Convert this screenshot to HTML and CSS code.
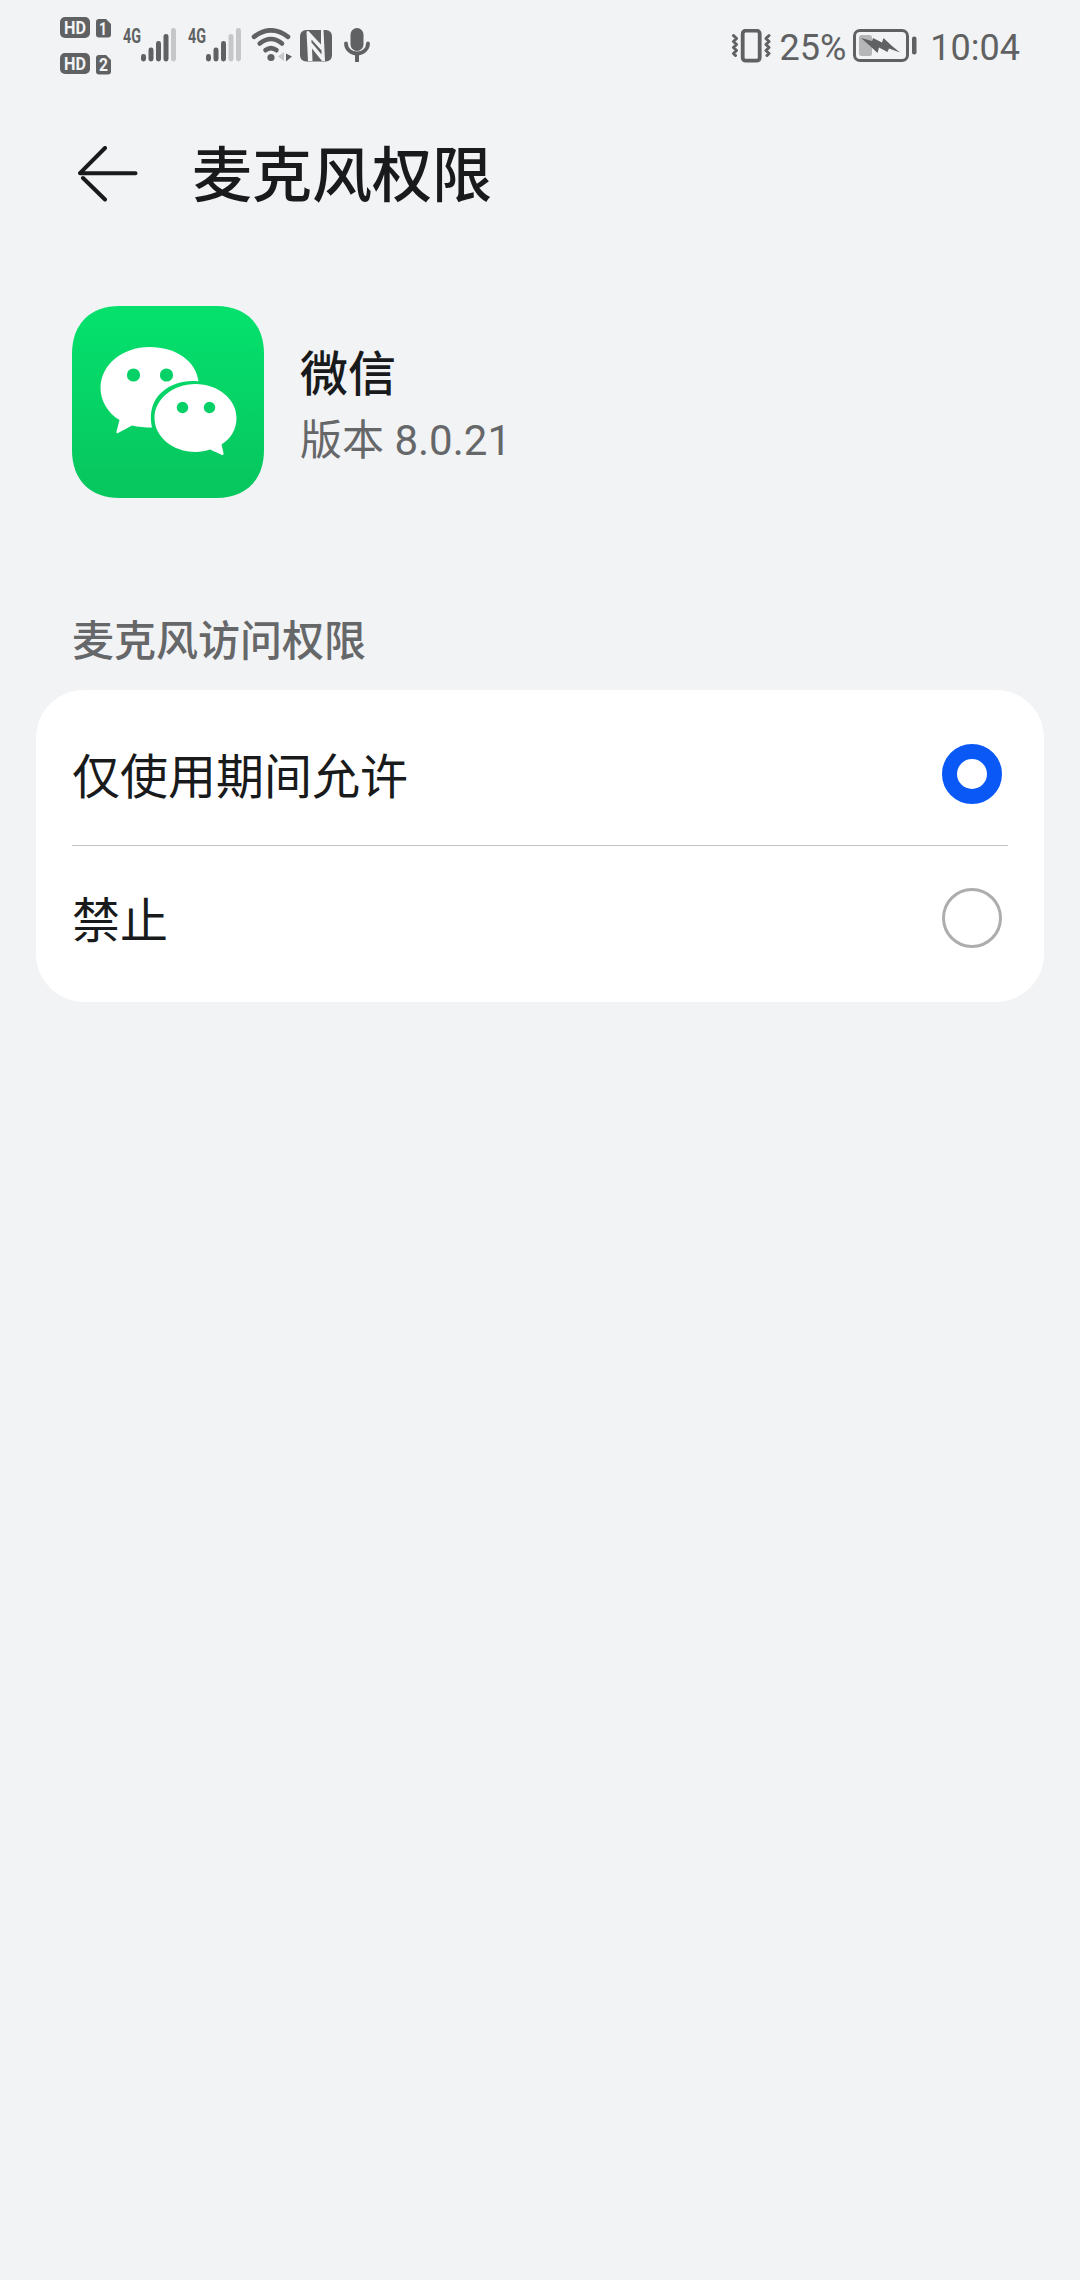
FILE: index.html
```html
<!DOCTYPE html>
<html lang="zh-CN">
<head>
<meta charset="UTF-8" />
<meta name="viewport" content="width=device-width, initial-scale=1" />
<title>麦克风权限</title>
<link rel="stylesheet" href="styles.css">
</head>
<body>
  <div class="status-bar">
    <div class="status-left">
      <!-- HD + SIM badges -->
      <svg class="icon-hd" width="52" height="60" viewBox="0 0 52 60">
        <rect x="0" y="0" width="30" height="21" rx="5" />
        <text class="badge" x="4" y="17.2" font-size="19" textLength="22" lengthAdjust="spacingAndGlyphs">HD</text>
        <path d="M39 2h7l5 5v10.500a3 3 0 0 1-3 3h-9a3 3 0 0 1-3-3v-12.500a3 3 0 0 1 3-3z" />
        <text class="badge" x="39" y="18" font-size="18" textLength="8" lengthAdjust="spacingAndGlyphs">1</text>
        <rect x="0" y="36" width="30" height="21" rx="5" />
        <text class="badge" x="4" y="53.200" font-size="19" textLength="22" lengthAdjust="spacingAndGlyphs">HD</text>
        <path d="M39 38h7l5 5v11.500a3 3 0 0 1-3 3h-9a3 3 0 0 1-3-3v-13.500a3 3 0 0 1 3-3z" />
        <text class="badge" x="39" y="54.400" font-size="18" textLength="9" lengthAdjust="spacingAndGlyphs">2</text>
      </svg>
      <svg class="icon-signal" width="54" height="42" viewBox="0 -8 54 42">
        <text class="net" x="0" y="15" font-size="20.500" textLength="18" lengthAdjust="spacingAndGlyphs">4G</text>
        <rect x="18" y="26" width="5" height="7.500" rx="2.400" />
        <rect x="25.500" y="19.500" width="5" height="14" rx="2.400" />
        <rect x="33" y="13" width="5" height="20.500" rx="2.400" />
        <rect x="40.500" y="6" width="5" height="27.500" rx="2.400" />
        <rect class="dim" x="48" y="0" width="5" height="33.500" rx="2.400" />
      </svg>
      <svg class="icon-signal" width="54" height="42" viewBox="0 -8 54 42">
        <text class="net" x="0" y="15" font-size="20.500" textLength="18" lengthAdjust="spacingAndGlyphs">4G</text>
        <rect x="18" y="26" width="5" height="7.500" rx="2.400" />
        <rect x="25.500" y="19.500" width="5" height="14" rx="2.400" />
        <rect x="33" y="13" width="5" height="20.500" rx="2.400" />
        <rect class="dim" x="40.500" y="6" width="5" height="27.500" rx="2.400" />
        <rect class="dim" x="48" y="0" width="5" height="33.500" rx="2.400" />
      </svg>
      <svg class="icon-wifi" width="42" height="34" viewBox="0 0 42 34">
        <g class="line" stroke-width="4.600">
          <path d="M3 8.800Q20 -4.200 37 8.800" />
          <path d="M8.700 15.500Q20 6.500 31 15.500" />
          <path d="M14.500 22.200Q20 18 25.500 22.200" />
        </g>
        <circle cx="20" cy="29.500" r="3.600" />
        <path class="dim" d="M33 24v9l-6-4.500z" />
        <path d="M35 25.500l6 3-6 5z" />
      </svg>
      <svg class="icon-nfc" width="32" height="32" viewBox="0 0 32 32">
        <rect width="32" height="31.500" rx="6" />
        <path class="cut" d="M6.500 1.500L8.500 1L21 14.500V0h2.500L25 31h-3L12 18.500L12.500 31H8z" />
        <path d="M11.500 9.500L21.500 20.500V24.500L11.500 12.500z" />
      </svg>
      <svg class="icon-mic" width="26" height="34" viewBox="0 0 26 34">
        <rect x="6.500" y="0" width="13" height="23" rx="6.500" />
        <path class="line" stroke-width="3.800" d="M2 15.500a11 10 0 0 0 22 0" />
        <path d="M11 26h4v8h-4z" />
      </svg>
    </div>
    <div class="status-right">
      <svg class="icon-vibrate" width="40" height="34" viewBox="0 0 40 34">
        <rect class="line" x="11.700" y="1.700" width="17" height="30" rx="3" stroke-width="3.800" />
        <path class="line" stroke-width="3" d="M2.500 6.500l3 3-3 3 3 3-3 3 3 3-3 3 2 2M38 6.500l-3 3 3 3-3 3 3 3-3 3 3 3-2 2" />
      </svg>
      <span class="percent">25%</span>
      <svg class="icon-battery" width="64" height="34" viewBox="0 0 64 34">
        <rect class="fill" x="6" y="6" width="13" height="21" rx="2.500" />
        <rect class="line" x="1.500" y="1.500" width="53" height="30" rx="5.500" stroke-width="3" />
        <rect x="59" y="7.500" width="4.500" height="18" rx="2" />
        <path d="M8 9l11 3 1-3 9 4.500 1.500-4.500 8.500 8 8 6.500-11-4-1.500 3.500-8.500-4.500-1.500 5.500-8.500-8z" />
      </svg>
      <span class="clock">10:04</span>
    </div>
  </div>

  <div class="header">
    <svg class="back" width="60" height="56" viewBox="0 0 60 56">
      <path d="M27 2L2 27.200H57.500M27 53.500L5 32" />
    </svg>
    <h1>麦克风权限</h1>
  </div>

  <div class="app">
    <svg class="app-icon" width="192" height="192" viewBox="0 0 192 192">
      <defs>
        <linearGradient id="green" x1="0" y1="0" x2="0" y2="1">
          <stop offset="0.100" stop-color="#05df6c" />
          <stop offset="0.900" stop-color="#07c75f" />
        </linearGradient>
      </defs>
      <path fill="url(#green)" d="M48 0H144C174 0 192 18 192 48V144C192 174 174 192 144 192H48C18 192 0 174 0 144V48C0 18 18 0 48 0Z" />
      <path class="bubble" d="M77.500 41C104 41 124 55 126.500 75.200C110 73.500 95 79 86 90C79 99 77.500 110 80 121.500C73 121.500 66 121 60 119.500L46 127Q44 128 44.500 125.500L47.500 114C36 107 28.500 95 28.500 82C28.500 59 50 41 77.500 41Z" />
      <path class="bubble" d="M123.500 78C146 78 164.500 93 164.500 112C164.500 123 159 132.500 149.500 138.500L151.500 147Q152 150 149 148.500L138 143.500C133.500 145 128.500 146 123.500 146C101 146 82.500 131 82.500 112C82.500 93 101 78 123.500 78Z" />
      <g fill="#06d167">
        <circle cx="61.500" cy="69" r="6.600" />
        <circle cx="94.500" cy="69" r="6.600" />
        <circle cx="110.500" cy="101.500" r="5.700" />
        <circle cx="137.500" cy="101.500" r="5.700" />
      </g>
    </svg>
    <div class="app-info">
      <div class="app-name">微信</div>
      <div class="app-version">版本 8.0.21</div>
    </div>
  </div>

  <h2 class="section-title">麦克风访问权限</h2>
  <div class="card" role="radiogroup" aria-label="麦克风访问权限">
    <div class="option" role="radio" aria-checked="true">
      <span>仅使用期间允许</span>
      <i class="radio checked"></i>
    </div>
    <div class="option" role="radio" aria-checked="false">
      <span>禁止</span>
      <i class="radio"></i>
    </div>
  </div>
</body>
</html>
```
FILE: styles.css
```css
/* Reset */
* {
  box-sizing: border-box;
  margin: 0;
  padding: 0;
}
body {
  background: #f2f3f5;
  color: #191a1b;
  font-family: "Noto Sans CJK SC", sans-serif;
  min-height: 100vh;
}
svg {
  display: block;
  flex-shrink: 0;
}

/* Status bar */
.status-bar {
  height: 90px;
  padding: 17px 60px 0;
  display: flex;
  justify-content: space-between;
  align-items: flex-start;
  color: #606163;
  fill: #606163;
}
.status-left,
.status-right {
  display: flex;
}
.line {
  fill: none;
  stroke: #606163;
  stroke-linecap: round;
  stroke-linejoin: round;
}
.dim {
  fill: #c6c7c9;
}
.fill {
  fill: #b5b6b8;
}
.cut {
  fill: #f2f3f5;
}
.badge {
  fill: #f2f3f5;
  font-family: Roboto, sans-serif;
  font-weight: 700;
}
.net {
  font-family: Roboto, sans-serif;
  font-weight: 700;
}
.icon-signal {
  margin: 3px 0 0 11px;
}
.icon-wifi {
  margin: 11px 0 0 9px;
}
.icon-nfc {
  margin: 13px 0 0 7px;
}
.icon-mic {
  margin: 11px 0 0 12px;
}
.icon-vibrate,
.icon-battery {
  margin-top: 12px;
}
.percent,
.clock {
  font-family: Roboto, sans-serif;
  font-size: 36px;
  line-height: 62px;
}
.percent {
  margin-left: 9px;
}
.icon-battery {
  margin-left: 7px;
}
.clock {
  margin-left: 13px;
}

/* Title */
.header {
  height: 168px;
  padding: 0 78px;
  display: flex;
  align-items: center;
}
.back {
  margin-right: 54px;
  fill: none;
  stroke: #191a1b;
  stroke-width: 4;
  stroke-linecap: round;
  stroke-linejoin: round;
}
h1 {
  padding-bottom: 6px;
  font-size: 60px;
  font-weight: 500;
  line-height: 84px;
}

/* App info */
.app {
  display: flex;
  align-items: center;
  gap: 36px;
  margin-top: 48px;
  padding: 0 72px;
}
.bubble {
  fill: #fff;
}
.app-info {
  padding-top: 4px;
}
.app-name {
  font-size: 48px;
  font-weight: 500;
  line-height: 70px;
}
.app-version {
  padding-top: 4px;
  color: #666769;
  font-family: Roboto, "Noto Sans CJK SC", sans-serif;
  font-size: 42px;
  line-height: 64px;
}

/* Permission options */
.section-title {
  margin-top: 108px;
  padding: 0 72px;
  color: #666769;
  font-size: 42px;
  font-weight: 500;
  line-height: 64px;
}
.card {
  margin: 20px 36px 0;
  padding: 12px 36px;
  background: #fff;
  border-radius: 48px;
}
.option {
  height: 144px;
  padding-right: 6px;
  display: flex;
  align-items: center;
  justify-content: space-between;
  font-size: 48px;
}
.option span {
  padding-bottom: 2px;
}
.option + .option {
  box-shadow: 0 -1px #c4c4c4;
}
.radio {
  width: 60px;
  height: 60px;
  border: 3px solid #adadad;
  border-radius: 50%;
}
.radio.checked {
  border: 15px solid #0a59f7;
}
```
